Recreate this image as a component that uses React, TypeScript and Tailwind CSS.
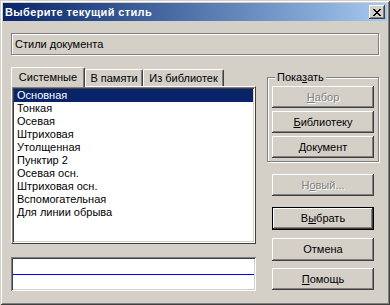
import clsx from "clsx";
import type { ReactNode } from "react";

const raised =
  "shadow-[inset_-1px_-1px_#404040,inset_1px_1px_#ffffff,inset_-2px_-2px_#808080,inset_2px_2px_#d4d0c8]";
const sunken =
  "shadow-[inset_1px_1px_#808080,inset_-1px_-1px_#ffffff,inset_2px_2px_#404040,inset_-2px_-2px_#d4d0c8]";

const styles = [
  "Основная",
  "Тонкая",
  "Осевая",
  "Штриховая",
  "Утолщенная",
  "Пунктир 2",
  "Осевая осн.",
  "Штриховая осн.",
  "Вспомогательная",
  "Для линии обрыва",
];

function Btn({ children, disabled, isDefault, className }: { children: ReactNode; disabled?: boolean; isDefault?: boolean; className?: string }) {
  return (
    <div
      className={clsx(
        "flex w-[102px] items-center justify-center bg-[#d4d0c8]",
        raised,
        isDefault && "border border-black",
        disabled ? "text-[#808080] [text-shadow:1px_1px_0_#ffffff]" : "text-black",
        className
      )}
    >
      {children}
    </div>
  );
}

function CloseGlyph() {
  return (
    <svg width="8" height="7" viewBox="0 0 8 7" shapeRendering="crispEdges">
      <path
        fill="#000"
        d="M0 0h2v1H0z M6 0h2v1H6z M1 1h2v1H1z M5 1h2v1H5z M2 2h4v1H2z M3 3h2v1H3z M2 4h4v1H2z M1 5h2v1H1z M5 5h2v1H5z M0 6h2v1H0z M6 6h2v1H6z"
      />
    </svg>
  );
}

export default function App() {
  return (
    <div
      className={clsx(
        "flex h-[305px] w-[390px] flex-col bg-[#d4d0c8] p-[3px] font-['Liberation_Sans',Arial,sans-serif] text-[11px] leading-[13px] text-black",
        "shadow-[inset_1px_1px_#d4d0c8,inset_-1px_-1px_#404040,inset_2px_2px_#ffffff,inset_-2px_-2px_#808080]"
      )}
    >
      {/* title bar */}
      <div className="flex h-[18px] items-center bg-gradient-to-r from-[#0a246a] to-[#a6caf0] pl-[2px] pr-[2px]">
        <span className="flex-1 text-[11px] font-bold tracking-[0.35px] text-white">Выберите текущий стиль</span>
        <div className={clsx("flex h-[14px] w-[16px] items-center justify-center bg-[#d4d0c8]", raised)}>
          <CloseGlyph />
        </div>
      </div>

      <div className="flex flex-col px-[8px]">
        {/* document styles frame */}
        <div className="mt-[12px] flex h-[22px] items-center border border-[#808080] pl-[3px] shadow-[inset_1px_1px_#ffffff,1px_1px_#ffffff]">
          Стили документа
        </div>

        <div className="mt-[12px] flex">
          {/* left column */}
          <div className="flex w-[245px] flex-col">
            <div className="flex h-[19px] items-end">
              <div className="relative z-10 -mb-px flex h-[20px] w-[74px] items-center justify-center rounded-t-[2px] border-l border-r border-t border-l-white border-r-[#404040] border-t-white bg-[#d4d0c8] shadow-[inset_-1px_0_#808080]">
                Системные
              </div>
              <div className="flex h-[17px] w-[58px] items-center justify-center rounded-t-[2px] border-l border-r border-t border-l-white border-r-[#404040] border-t-white shadow-[inset_-1px_0_#808080]">
                В памяти
              </div>
              <div className="flex h-[17px] w-[81px] items-center justify-center rounded-t-[2px] border-l border-r border-t border-l-white border-r-[#404040] border-t-white shadow-[inset_-1px_0_#808080]">
                Из библиотек
              </div>
            </div>
            <div className="flex h-[158px] border border-b-[#404040] border-l-white border-r-[#404040] border-t-white">
              <div className={clsx("flex flex-1 flex-col bg-white p-[2px]", sunken)}>
                {styles.map((s, i) => (
                  <div
                    key={s}
                    className={clsx("h-[13px] pl-[3px] leading-[13px]", i === 0 ? "bg-[#0a246a] text-white" : "text-black")}
                  >
                    {s}
                  </div>
                ))}
              </div>
            </div>
            <div className={clsx("mt-[13px] flex h-[34px] items-center bg-white px-[2px]", sunken)}>
              <div className="h-px flex-1 bg-[#0000ff]" />
            </div>
          </div>

          {/* right column */}
          <div className="ml-[11px] flex w-[112px] flex-col">
            <fieldset className="mt-[4px] flex flex-col border border-[#808080] pb-[3px] pl-[4px] pt-[2px] shadow-[inset_1px_1px_#ffffff,1px_1px_#ffffff]">
              <legend className="ml-[3px] bg-[#d4d0c8] px-[2px] leading-[13px]">
                Пока<u>з</u>ать
              </legend>
              <Btn disabled className="h-[22px]">
                <u>Н</u>абор
              </Btn>
              <Btn className="mt-[3px] h-[22px]">
                <u>Б</u>иблиотеку
              </Btn>
              <Btn className="mt-[3px] h-[22px]">
                <u>Д</u>окумент
              </Btn>
            </fieldset>
            <Btn disabled className="ml-[5px] mt-[12px] h-[22px]">
              Н<u>о</u>вый...
            </Btn>
            <Btn isDefault className="ml-[5px] mt-[11px] h-[23px]">
              В<u>ы</u>брать
            </Btn>
            <Btn className="ml-[5px] mt-[8px] h-[23px]">Отмена</Btn>
            <Btn className="ml-[5px] mt-[7px] h-[22px]">
              <u>П</u>омощь
            </Btn>
          </div>
        </div>
      </div>
    </div>
  );
}
